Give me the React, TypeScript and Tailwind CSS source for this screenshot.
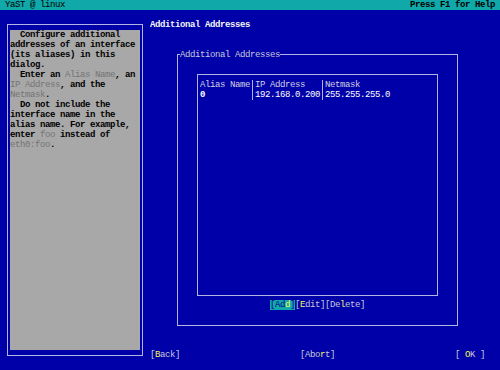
import React from "react";

// text-mode screen: 100 cols x 37 rows, each cell 5x10
const line = "border-[#b4b4e4]";

type BtnProps = {
  label: string;
  hot: number;
  col: string;
  row: string;
  active?: boolean;
};

const Btn = ({ label, hot, col, row, active }: BtnProps) => {
  return (
    <div
      className={`${col} ${row} whitespace-pre ${
        active ? "bg-[#10a8a8] text-[#00008c]" : "text-[#c8c8d8]"
      }`}
    >
      [{label.slice(0, hot)}
      <span className="text-[#f8f854]">{label[hot]}</span>
      {label.slice(hot + 1)}]
    </div>
  );
};

const helpLines: { t: string; dim?: boolean }[][] = [
  [{ t: "  Configure additional" }],
  [{ t: "addresses of an interface" }],
  [{ t: "(its aliases) in this" }],
  [{ t: "dialog." }],
  [{ t: "  Enter an " }, { t: "Alias Name", dim: true }, { t: ", an" }],
  [{ t: "IP Address", dim: true }, { t: ", and the" }],
  [{ t: "Netmask", dim: true }, { t: "." }],
  [{ t: "  Do not include the" }],
  [{ t: "interface name in the" }],
  [{ t: "alias name. For example," }],
  [{ t: "enter " }, { t: "foo", dim: true }, { t: " instead of" }],
  [{ t: "eth0:foo", dim: true }, { t: "." }],
];

const App = () => {
  return (
    <div className="w-[500px] h-[370px] overflow-hidden grid grid-cols-[repeat(100,5px)] grid-rows-[repeat(37,10px)] bg-[#0000a8] font-['Liberation_Mono',monospace] text-[9px] leading-[10px] tracking-[-0.4px]">
      {/* top bar */}
      <div className="col-start-1 col-span-100 row-start-1 bg-[#10a8a8] text-black flex justify-between px-[5px] whitespace-pre">
        <span>YaST @ linux</span>
        <span className="font-bold">Press F1 for Help</span>
      </div>

      {/* help panel */}
      <div
        className={`col-start-2 col-end-30 row-start-3 row-end-37 mx-[2px] my-[4px] border ${line} px-[2px] py-[5px] flex`}
      >
        <div className="flex-1 bg-[#a8a8a8] flex flex-col">
          {helpLines.map((l, i) => (
            <div key={i} className="whitespace-pre font-bold text-black">
              {l.map((s, j) => (
                <span key={j} className={s.dim ? "text-[#747474] font-normal" : ""}>
                  {s.t}
                </span>
              ))}
            </div>
          ))}
        </div>
      </div>

      {/* dialog title */}
      <div className="col-start-31 col-span-20 row-start-3 whitespace-pre font-bold text-[#f4f4f4]">
        Additional Addresses
      </div>

      {/* outer frame */}
      <div
        className={`col-start-36 col-end-93 row-start-6 row-end-34 mx-[2px] my-[4px] border ${line}`}
      />
      <div className="col-start-37 col-span-20 row-start-6 bg-[#0000a8] text-[#c8c8d8] whitespace-pre">
        Additional Addresses
      </div>

      {/* table frame */}
      <div
        className={`col-start-40 col-end-89 row-start-8 row-end-31 mx-[2px] my-[4px] border ${line}`}
      />

      {/* table header + row */}
      <div className="col-start-41 col-span-10 row-start-9 text-[#d0d0e0] whitespace-pre">
        Alias Name
      </div>
      <div className="col-start-51 row-start-9 row-span-2 justify-self-center w-px bg-[#b4b4e4]" />
      <div className="col-start-52 col-span-13 row-start-9 text-[#d0d0e0] whitespace-pre">
        IP Address
      </div>
      <div className="col-start-65 row-start-9 row-span-2 justify-self-center w-px bg-[#b4b4e4]" />
      <div className="col-start-66 col-span-13 row-start-9 text-[#d0d0e0] whitespace-pre">
        Netmask
      </div>

      <div className="col-start-41 col-span-10 row-start-10 text-white font-bold whitespace-pre">
        0
      </div>
      <div className="col-start-52 col-span-13 row-start-10 text-white whitespace-pre">
        192.168.0.200
      </div>
      <div className="col-start-66 col-span-13 row-start-10 text-white whitespace-pre">
        255.255.255.0
      </div>

      {/* table buttons */}
      <Btn label="Add" hot={2} col="col-start-55 col-span-5" row="row-start-31" active />
      <Btn label="Edit" hot={0} col="col-start-60 col-span-6" row="row-start-31" />
      <Btn label="Delete" hot={2} col="col-start-66 col-span-8" row="row-start-31" />

      {/* bottom buttons */}
      <Btn label="Back" hot={0} col="col-start-31 col-span-6" row="row-start-36" />
      <Btn label="Abort" hot={3} col="col-start-61 col-span-7" row="row-start-36" />
      <Btn label=" OK " hot={1} col="col-start-92 col-span-6" row="row-start-36" />
    </div>
  );
};

export default App;
